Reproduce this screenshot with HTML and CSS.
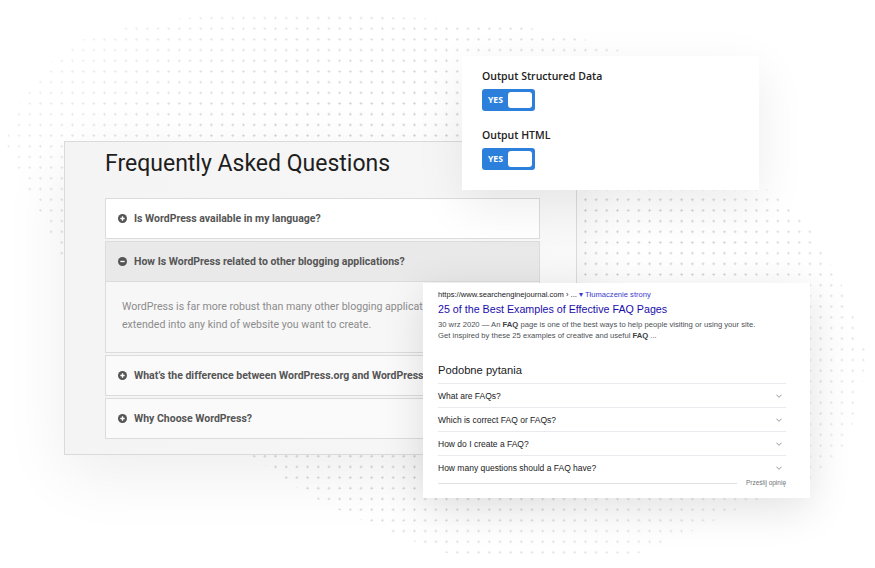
FILE: index.html
```html
<!DOCTYPE html>
<html lang="en">
<head>
<meta charset="utf-8">
<title>FAQ schema</title>
<link rel="stylesheet" href="styles.css">
</head>
<body>
<div class="stage">
  <div class="blob"></div>

  <section class="card faq">
    <h1 class="faq-title">Frequently Asked Questions</h1>
    <div class="acc">
      <div class="acc-item">
        <div class="acc-head">
          <svg class="acc-ico" viewBox="0 0 10 10"><circle cx="5" cy="5" r="5" fill="#555"/><path d="M2.6 5h4.8M5 2.6v4.8" stroke="#fff" stroke-width="1.5"/></svg>
          <span class="acc-q">Is WordPress available in my language?</span>
        </div>
      </div>
      <div class="acc-item open">
        <div class="acc-head">
          <svg class="acc-ico" viewBox="0 0 10 10"><circle cx="5" cy="5" r="5" fill="#555"/><path d="M2.6 5h4.8" stroke="#fff" stroke-width="1.5"/></svg>
          <span class="acc-q">How Is WordPress related to other blogging applications?</span>
        </div>
        <div class="acc-body">
          <p>WordPress is far more robust than many other blogging applications, and can be<br>extended into any kind of website you want to create.</p>
        </div>
      </div>
      <div class="acc-item dim">
        <div class="acc-head">
          <svg class="acc-ico" viewBox="0 0 10 10"><circle cx="5" cy="5" r="5" fill="#555"/><path d="M2.6 5h4.8M5 2.6v4.8" stroke="#fff" stroke-width="1.5"/></svg>
          <span class="acc-q">What’s the difference between WordPress.org and WordPress.com?</span>
        </div>
      </div>
      <div class="acc-item dim">
        <div class="acc-head">
          <svg class="acc-ico" viewBox="0 0 10 10"><circle cx="5" cy="5" r="5" fill="#555"/><path d="M2.6 5h4.8M5 2.6v4.8" stroke="#fff" stroke-width="1.5"/></svg>
          <span class="acc-q">Why Choose WordPress?</span>
        </div>
      </div>
    </div>
  </section>

  <section class="card settings">
    <div class="set-label">Output Structured Data</div>
    <div class="toggle"><span class="toggle-text">YES</span><span class="knob"></span></div>
    <div class="set-label second">Output HTML</div>
    <div class="toggle"><span class="toggle-text">YES</span><span class="knob"></span></div>
  </section>

  <section class="card serp">
    <div class="serp-url">https://www.searchenginejournal.com › ... <span class="serp-tr">▾ Tłumaczenie strony</span></div>
    <div class="serp-title">25 of the Best Examples of Effective FAQ Pages</div>
    <div class="serp-desc">30 wrz 2020 — An <b>FAQ</b> page is one of the best ways to help people visiting or using your site.<br>Get inspired by these 25 examples of creative and useful <b>FAQ</b> ...</div>
    <div class="paa-title">Podobne pytania</div>
    <div class="paa">
      <div class="paa-row"><span>What are FAQs?</span><svg class="chev" viewBox="0 0 7 4"><path d="M0.5 0.5l3 3 3-3" fill="none" stroke="#70757a" stroke-width="0.9"/></svg></div>
      <div class="paa-row"><span>Which is correct FAQ or FAQs?</span><svg class="chev" viewBox="0 0 7 4"><path d="M0.5 0.5l3 3 3-3" fill="none" stroke="#70757a" stroke-width="0.9"/></svg></div>
      <div class="paa-row"><span>How do I create a FAQ?</span><svg class="chev" viewBox="0 0 7 4"><path d="M0.5 0.5l3 3 3-3" fill="none" stroke="#70757a" stroke-width="0.9"/></svg></div>
      <div class="paa-row"><span>How many questions should a FAQ have?</span><svg class="chev" viewBox="0 0 7 4"><path d="M0.5 0.5l3 3 3-3" fill="none" stroke="#70757a" stroke-width="0.9"/></svg></div>
    </div>
    <div class="paa-foot"><span class="foot-line"></span><span class="foot-text">Prześlij opinię</span></div>
  </section>
</div>
</body>
</html>
```

FILE: styles.css
```css
* { box-sizing: border-box; }

html, body {
  margin: 0;
  padding: 0;
  background: #ffffff;
}

.stage {
  position: relative;
  width: 875px;
  height: 568px;
  overflow: hidden;
  background: #ffffff;
}

/* decorative dotted blob behind the cards */
.blob {
  position: absolute;
  left: 0;
  top: 0;
  width: 875px;
  height: 568px;
  background-image: radial-gradient(circle, #d3d3d7 0.9px, rgba(211,211,215,0) 1.4px);
  background-size: 10.7px 10.7px;
  background-position: 3px 2px;
  -webkit-mask-image: radial-gradient(ellipse 58% 60% at 50% 50%, #000 55%, rgba(0,0,0,0.35) 100%);
  mask-image: radial-gradient(ellipse 58% 60% at 50% 50%, #000 55%, rgba(0,0,0,0.35) 100%);
  clip-path: polygon(
    10px 127px, 17px 108px, 33px 82px, 57px 55px, 85px 38px, 133px 25px,
    183px 18px, 240px 15px, 320px 15px, 420px 18px, 520px 26px, 610px 45px,
    680px 90px, 730px 150px, 765px 188px, 805px 220px, 840px 280px, 866px 350px,
    860px 405px, 845px 445px, 812px 478px, 750px 503px, 688px 533px, 630px 557px,
    463px 559px, 410px 540px, 345px 513px, 305px 493px, 264px 465px, 200px 430px,
    130px 355px, 62px 258px, 47px 233px, 33px 200px, 17px 167px, 6px 143px
  );
}

.card {
  position: absolute;
}

/* FAQ card */
.faq {
  left: 64px;
  top: 141px;
  width: 513px;
  height: 314px;
  padding: 6px 36px 0 40px;
  background: linear-gradient(90deg, #f4f4f4 0%, #f6f6f6 70%, #f9f9f9 100%);
  border: 1px solid #dadada;
  box-shadow: 0 20px 60px rgba(0,0,0,0.07);
  font-family: Roboto, "Liberation Sans", sans-serif;
}

.faq-title {
  margin: 0 0 18px 0;
  font-size: 23px;
  line-height: 32px;
  font-weight: 400;
  color: #1e1e1e;
}

.acc {
  display: flex;
  flex-direction: column;
  gap: 2px;
}

.acc-item {
  border: 1px solid #dcdcdc;
  background: #ffffff;
}

.acc-item.dim {
  background: #fafafa;
}

.acc-head {
  height: 39px;
  display: flex;
  align-items: center;
  gap: 7px;
  padding-left: 12px;
  font-size: 10.5px;
  font-weight: 700;
  color: #555555;
  white-space: nowrap;
  overflow: hidden;
}

.acc-item.open .acc-head {
  background: #e9e9e9;
  border-bottom: 1px solid #dcdcdc;
  height: 40px;
}

.acc-ico {
  width: 9px;
  height: 9px;
  flex: none;
}

.acc-body {
  background: #f7f7f7;
  padding: 16px 0 18px 16px;
  overflow: hidden;
}

.acc-body p {
  margin: 0;
  font-size: 10.6px;
  line-height: 18px;
  color: #8c8c8c;
  white-space: nowrap;
}

/* settings card */
.settings {
  left: 462px;
  top: 56px;
  width: 297px;
  height: 134px;
  padding: 13px 20px;
  background: #ffffff;
  box-shadow: 0 16px 50px rgba(0,0,0,0.08);
  font-family: "Open Sans", "Noto Sans", sans-serif;
}

.set-label {
  font-size: 10.5px;
  line-height: 14px;
  font-weight: 600;
  color: #222222;
}

.set-label.second {
  margin-top: 17px;
}

.toggle {
  margin-top: 6px;
  width: 53px;
  height: 22px;
  border-radius: 3px;
  background: #2d7fdc;
  display: flex;
  align-items: center;
  padding: 0 3px 0 6px;
}

.toggle-text {
  font-size: 8.6px;
  font-weight: 700;
  color: #ffffff;
  line-height: 22px;
}

.knob {
  margin-left: auto;
  width: 24px;
  height: 16px;
  border-radius: 3px;
  background: #ffffff;
}

/* search result card */
.serp {
  left: 423px;
  top: 283px;
  width: 387px;
  height: 215px;
  padding: 7px 24px 0 15px;
  background: #ffffff;
  box-shadow: 0 10px 40px rgba(0,0,0,0.12);
  font-family: "Liberation Sans", Arial, sans-serif;
}

.serp-url {
  font-size: 7.6px;
  line-height: 10px;
  color: #202124;
  white-space: nowrap;
}

.serp-tr {
  color: #3b3bce;
}

.serp-title {
  margin-top: 2px;
  font-size: 10.7px;
  line-height: 14px;
  color: #1a0dab;
  white-space: nowrap;
}

.serp-desc {
  margin-top: 3px;
  font-size: 7.65px;
  line-height: 11px;
  color: #4d5156;
  white-space: nowrap;
}

.serp-desc b {
  color: #3c4043;
}

.paa-title {
  margin-top: 22px;
  font-size: 11.2px;
  line-height: 14px;
  color: #202124;
}

.paa {
  margin-top: 6px;
}

.paa-row {
  height: 24px;
  border-top: 1px solid #e8eaed;
  display: flex;
  align-items: center;
  justify-content: space-between;
  font-size: 8.5px;
  color: #202124;
}

.chev {
  width: 6px;
  height: 4px;
  margin-right: 4px;
}

.paa-foot {
  display: flex;
  align-items: center;
  height: 6px;
  margin-top: 1px;
}

.foot-line {
  flex: 1;
  height: 1px;
  background: #dfe1e5;
}

.foot-text {
  margin-left: 9px;
  font-size: 6.5px;
  line-height: 6px;
  color: #70757a;
}
```
